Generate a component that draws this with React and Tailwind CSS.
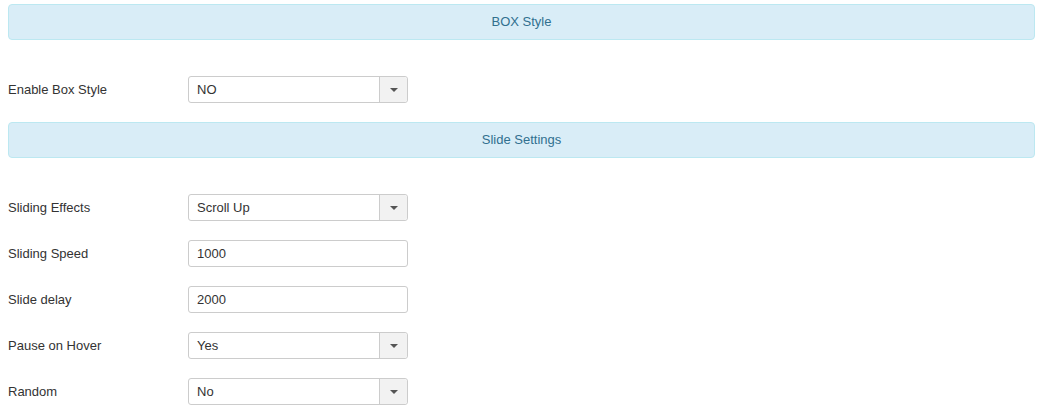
import React from 'react';

function Caret() {
  return (
    <svg width="8" height="4" viewBox="0 0 8 4" className="block">
      <path d="M0 0 L8 0 L4 4 Z" fill="#555" />
    </svg>
  );
}

function Header({ title }) {
  return (
    <div className="h-[36px] flex items-center justify-center rounded-[4px] border border-[#bce8f1] bg-[#d9edf7] text-[13px] text-[#31708f]">
      {title}
    </div>
  );
}

function SelectField({ value }) {
  return (
    <div className="w-[220px] h-[27px] flex rounded-[3px] border border-[#ccc] bg-white">
      <div className="flex-1 flex items-center pl-[8px] text-[13px] text-[#333]">{value}</div>
      <div className="w-[28px] flex items-center justify-center border-l border-[#ccc] bg-[#f2f2f2] rounded-r-[3px]">
        <Caret />
      </div>
    </div>
  );
}

function TextField({ value }) {
  return (
    <div className="w-[220px] h-[27px] flex items-center rounded-[3px] border border-[#ccc] bg-white pl-[8px] text-[13px] text-[#333]">
      {value}
    </div>
  );
}

function Row({ label, children }) {
  return (
    <div className="flex items-center h-[27px]">
      <div className="w-[180px] text-[13px] text-[#333]">{label}</div>
      {children}
    </div>
  );
}

export default function App() {
  return (
    <div className="w-[1043px] h-[413px] bg-white px-[8px] pt-[4px]" style={{ fontFamily: '"Liberation Sans", Arial, sans-serif' }}>
      <Header title="BOX Style" />
      <div className="mt-[36px]">
        <Row label="Enable Box Style">
          <SelectField value="NO" />
        </Row>
      </div>
      <div className="mt-[19px]">
        <Header title="Slide Settings" />
      </div>
      <div className="mt-[36px] flex flex-col gap-[19px]">
        <Row label="Sliding Effects">
          <SelectField value="Scroll Up" />
        </Row>
        <Row label="Sliding Speed">
          <TextField value="1000" />
        </Row>
        <Row label="Slide delay">
          <TextField value="2000" />
        </Row>
        <Row label="Pause on Hover">
          <SelectField value="Yes" />
        </Row>
        <Row label="Random">
          <SelectField value="No" />
        </Row>
      </div>
    </div>
  );
}
